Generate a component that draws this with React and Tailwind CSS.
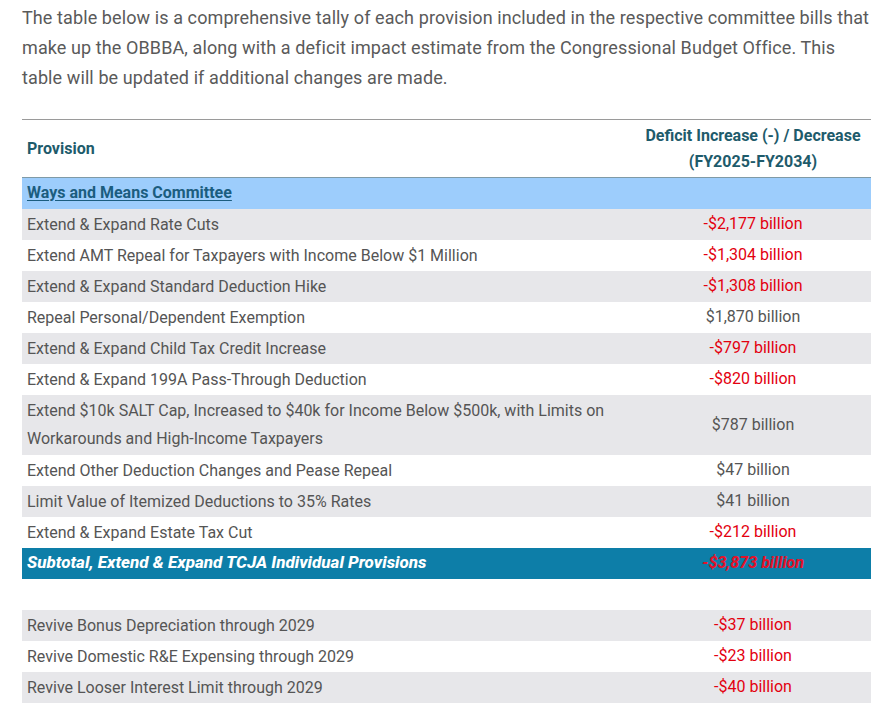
const rows = [
  { label: "Extend & Expand Rate Cuts", value: "-$2,177 billion", neg: true },
  { label: "Extend AMT Repeal for Taxpayers with Income Below $1 Million", value: "-$1,304 billion", neg: true },
  { label: "Extend & Expand Standard Deduction Hike", value: "-$1,308 billion", neg: true },
  { label: "Repeal Personal/Dependent Exemption", value: "$1,870 billion" },
  { label: "Extend & Expand Child Tax Credit Increase", value: "-$797 billion", neg: true },
  { label: "Extend & Expand 199A Pass-Through Deduction", value: "-$820 billion", neg: true },
  {
    label: (
      <>
        Extend $10k SALT Cap, Increased to $40k for Income Below $500k, with Limits on
        <br />
        Workarounds and High-Income Taxpayers
      </>
    ),
    value: "$787 billion",
    tall: true,
  },
  { label: "Extend Other Deduction Changes and Pease Repeal", value: "$47 billion" },
  { label: "Limit Value of Itemized Deductions to 35% Rates", value: "$41 billion" },
  { label: "Extend & Expand Estate Tax Cut", value: "-$212 billion", neg: true },
];

const business = [
  { label: "Revive Bonus Depreciation through 2029", value: "-$37 billion", neg: true },
  { label: "Revive Domestic R&E Expensing through 2029", value: "-$23 billion", neg: true },
  { label: "Revive Looser Interest Limit through 2029", value: "-$40 billion", neg: true },
];

const Row = ({ row, shaded }) => (
  <tr className={shaded ? "bg-[#e7e7ea]" : "bg-white"}>
    <td className={`pl-[5px] text-[16px] text-[#555] ${row.tall ? "h-[60px] leading-[28px]" : "h-[31px] leading-[31px]"}`}>
      {row.label}
    </td>
    <td className={`text-center text-[16px] ${row.neg ? "text-[#e3000f]" : "text-[#555]"}`}>{row.value}</td>
  </tr>
);

export default function App() {
  return (
    <div className="bg-white w-[880px] h-[703px] overflow-hidden px-[22px] pt-[3px] font-['Roboto',sans-serif]">
      <p className="text-[18px] leading-[30px] text-[#5a5a5a] tracking-[0.1px] whitespace-nowrap">
        The table below is a comprehensive tally of each provision included in the respective committee bills that
        <br />
        make up the OBBBA, along with a deficit impact estimate from the Congressional Budget Office. This
        <br />
        table will be updated if additional changes are made.
      </p>

      <table className="mt-[26px] w-[849px] border-collapse border-t border-[#9a9a9a]">
        <thead>
          <tr className="border-b border-[#7f9aa6] h-[58px]">
            <th className="text-left pl-[5px] text-[16px] font-bold text-[#1e5b6b] w-[613px]">Provision</th>
            <th className="text-center text-[16px] leading-[26px] font-bold text-[#1e5b6b]">
              Deficit Increase (-) / Decrease
              <br />
              (FY2025-FY2034)
            </th>
          </tr>
        </thead>
        <tbody>
          <tr className="bg-[#9dcdfc] h-[31px]">
            <td colSpan={2} className="pl-[5px] text-[16px] font-bold">
              <a href="#" className="text-[#1b5d7f] underline underline-offset-2">Ways and Means Committee</a>
            </td>
          </tr>
          {rows.map((row, i) => (
            <Row key={i} row={row} shaded={i % 2 === 0} />
          ))}
          <tr className="bg-[#0d7ea8] h-[31px]">
            <td className="pl-[5px] text-[17px] font-extrabold italic text-white">
              Subtotal, Extend & Expand TCJA Individual Provisions
            </td>
            <td className="text-center text-[16px] font-extrabold italic text-[#e3122a]">-$3,873 billion</td>
          </tr>
          <tr className="h-[31px] bg-white">
            <td colSpan={2}></td>
          </tr>
          {business.map((row, i) => (
            <Row key={i} row={row} shaded={i % 2 === 0} />
          ))}
        </tbody>
      </table>
    </div>
  );
}
